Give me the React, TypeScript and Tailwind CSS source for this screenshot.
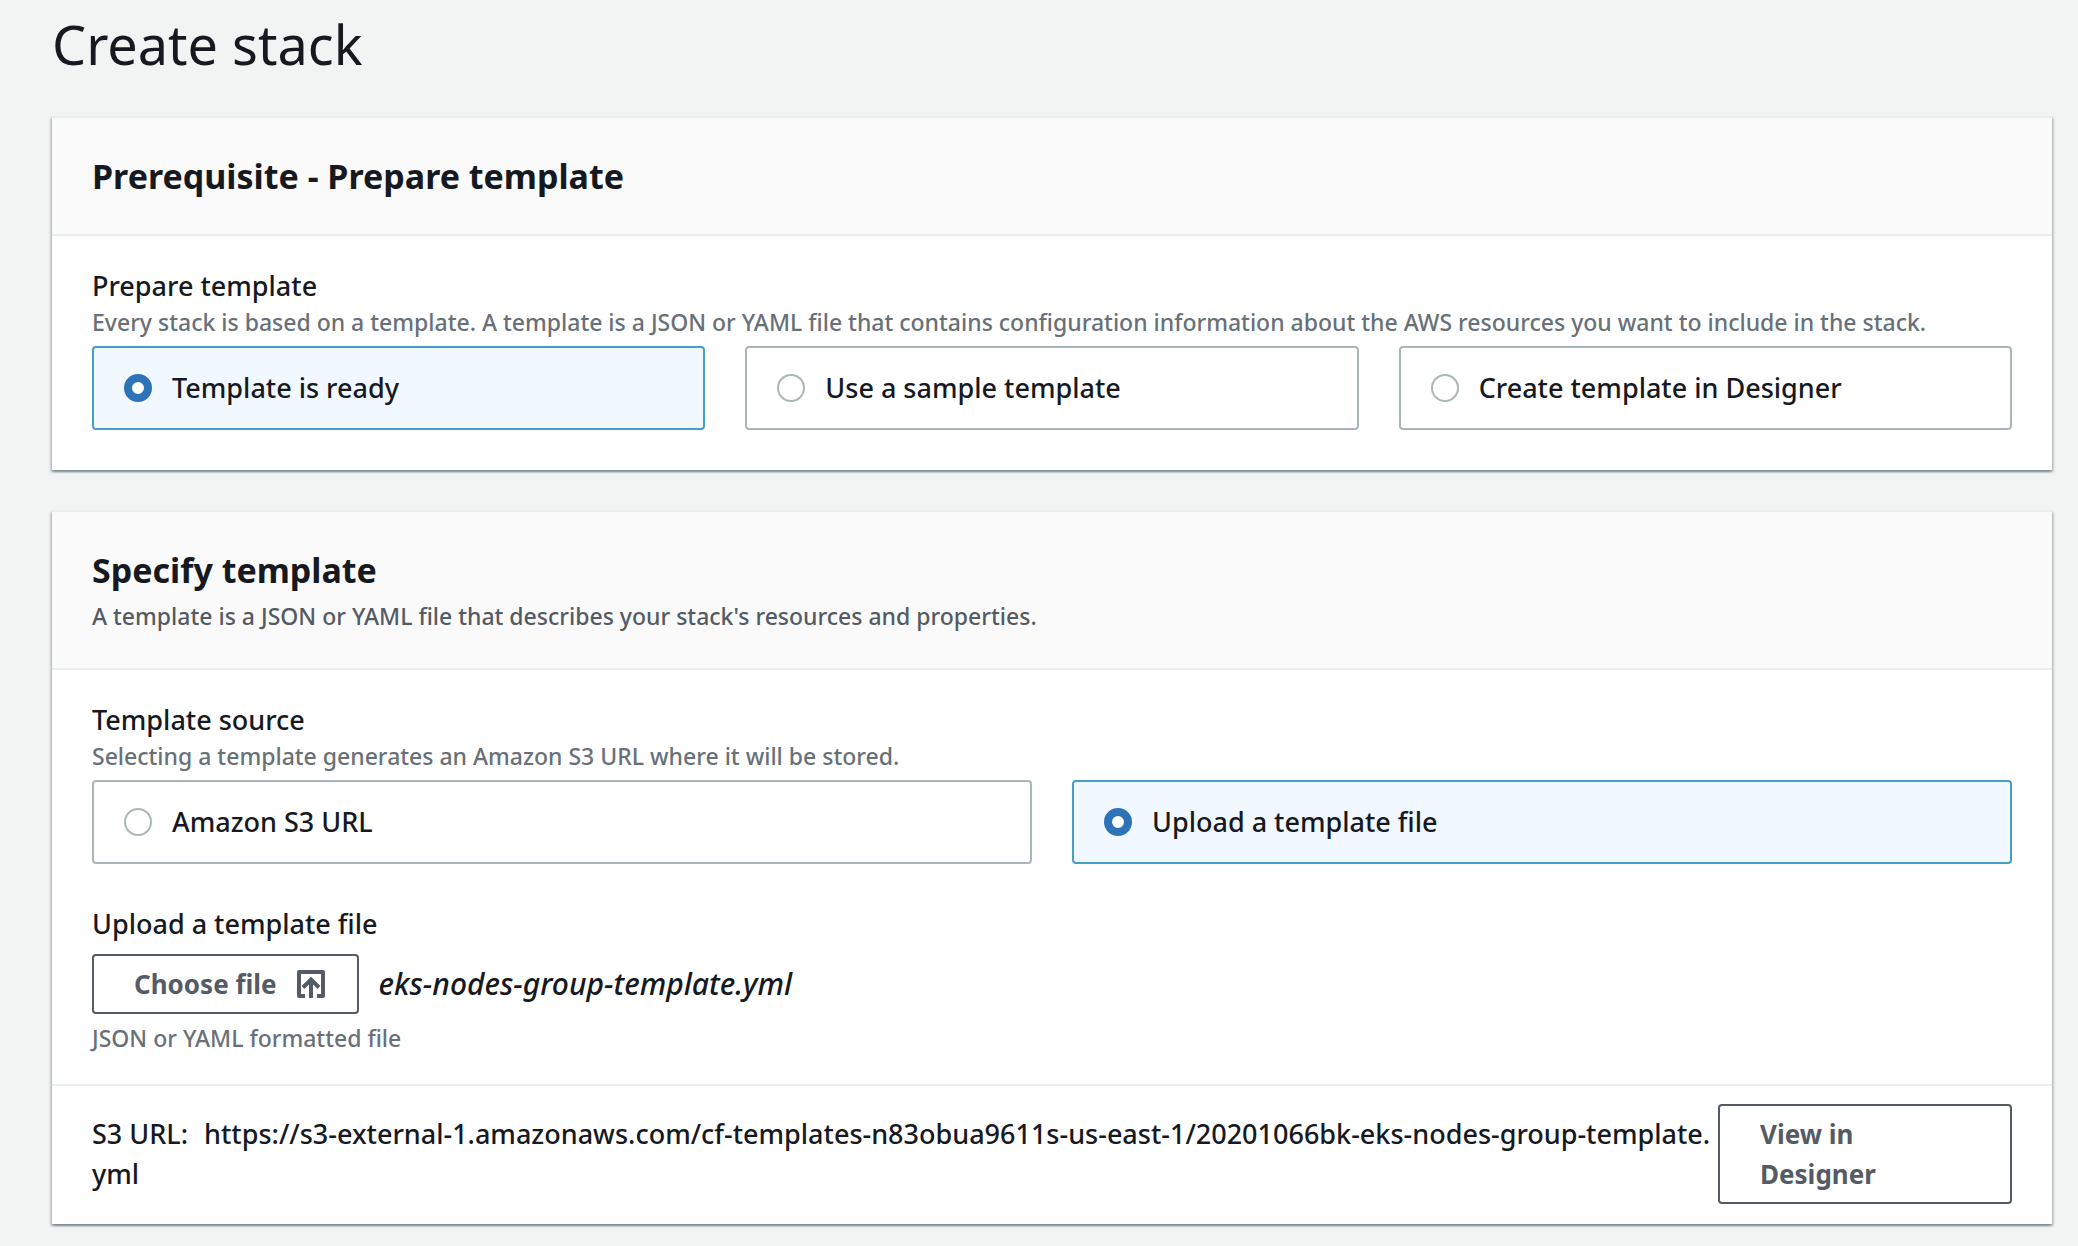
import React, { useRef, useState } from "react";

type TileProps = {
  name: string;
  label: string;
  checked: boolean;
  onSelect: () => void;
};

function Tile({ name, label, checked, onSelect }: TileProps) {
  return (
    <label
      className={
        checked
          ? "flex cursor-pointer items-center gap-5 rounded border-2 border-[#45a0c8] bg-[#f1f8ff] px-[30px] py-5"
          : "flex cursor-pointer items-center gap-5 rounded border-2 border-[#aab7b8] bg-white px-[30px] py-5"
      }
    >
      <input
        type="radio"
        name={name}
        checked={checked}
        onChange={onSelect}
        className="size-7 shrink-0 appearance-none rounded-full border-2 border-[#aab7b8] bg-white checked:border-8 checked:border-[#2e73b8]"
      />
      <span className="text-[27px] leading-10">{label}</span>
    </label>
  );
}

type TileGroupProps = {
  name: string;
  title: string;
  options: string[];
  initial: string;
  className: string;
};

function TileGroup({ name, title, options, initial, className }: TileGroupProps) {
  const [value, setValue] = useState(initial);
  return (
    <div role="radiogroup" aria-label={title} className={className}>
      {options.map((option) => (
        <Tile key={option} name={name} label={option} checked={option === value} onSelect={() => setValue(option)} />
      ))}
    </div>
  );
}

function Card({ title, description, children }: { title: string; description?: string; children: React.ReactNode }) {
  return (
    <section className="border-t-2 border-[#eaeded] bg-white shadow-[0_2px_2px_0_rgba(0,28,36,0.3),2px_2px_2px_0_rgba(0,28,36,0.15),-2px_2px_2px_0_rgba(0,28,36,0.15)]">
      <header className="border-b-2 border-[#eaeded] bg-[#fafafa] px-10 py-9">
        <h2 className="text-[34px] leading-[44px] font-bold">{title}</h2>
        {description && <p className="mt-2 text-[23px] leading-8 text-[#545b64]">{description}</p>}
      </header>
      {children}
    </section>
  );
}

function UploadIcon() {
  return (
    <svg viewBox="0 0 28 28" className="size-7 shrink-0" fill="none" stroke="currentColor" strokeWidth="4" aria-hidden="true">
      <path d="M8 26H2V2h24v24h-6" strokeLinejoin="round" />
      <path d="M14 28V10" />
      <path d="M6 17.5l8-8 8 8" />
    </svg>
  );
}

export default function App() {
  const fileInput = useRef<HTMLInputElement>(null);
  const [fileName, setFileName] = useState("eks-nodes-group-template.yml");

  return (
    <main className="min-h-screen bg-[#f2f3f3] pt-3 pr-[26px] pb-5 pl-[52px] font-['Noto_Sans','Open_Sans',sans-serif] font-medium text-[#16191f]">
      <h1 className="text-[54px] leading-[64px] font-normal">Create stack</h1>

      <div className="mt-10 flex flex-col gap-10">
        <Card title="Prerequisite - Prepare template">
          <div className="px-10 pt-[30px] pb-10">
            <h3 className="text-[27px] leading-10 font-medium">Prepare template</h3>
            <p className="text-[23px] leading-8 text-[#687078]">
              Every stack is based on a template. A template is a JSON or YAML file that contains configuration information about the AWS resources
              you want to include in the stack.
            </p>
            <TileGroup
              name="prepare-template"
              title="Prepare template"
              className="mt-2 grid grid-cols-3 gap-10"
              initial="Template is ready"
              options={["Template is ready", "Use a sample template", "Create template in Designer"]}
            />
          </div>
        </Card>

        <Card title="Specify template" description="A template is a JSON or YAML file that describes your stack's resources and properties.">
          <div className="px-10 py-[30px]">
            <h3 className="text-[27px] leading-10 font-medium">Template source</h3>
            <p className="text-[23px] leading-8 text-[#687078]">Selecting a template generates an Amazon S3 URL where it will be stored.</p>
            <TileGroup
              name="template-source"
              title="Template source"
              className="mt-2 grid grid-cols-2 gap-10"
              initial="Upload a template file"
              options={["Amazon S3 URL", "Upload a template file"]}
            />

            <label htmlFor="template-file" className="mt-10 block text-[27px] leading-10">
              Upload a template file
            </label>
            <div className="mt-[10px] flex items-center gap-5">
              <button
                type="button"
                onClick={() => fileInput.current?.click()}
                className="flex items-center gap-5 rounded border-2 border-[#545b64] bg-white py-2 pr-8 pl-10 text-[26px] leading-10 font-bold text-[#545b64]"
              >
                Choose file
                <UploadIcon />
              </button>
              <input
                ref={fileInput}
                id="template-file"
                type="file"
                accept=".json,.yml,.yaml"
                className="hidden"
                onChange={(e) => setFileName(e.target.files?.[0]?.name ?? fileName)}
              />
              <span className="text-[30px] leading-10 italic">{fileName}</span>
            </div>
            <p className="mt-2 text-[23px] leading-8 text-[#687078]">JSON or YAML formatted file</p>
          </div>

          <div className="flex items-center border-t-2 border-[#eaeded] px-10 pt-[18px] pb-5">
            <p className="min-w-0 flex-1 text-[27px] leading-10 break-all">
              <span className="mr-4">S3 URL:</span>
              https://s3-external-1.amazonaws.com/cf-templates-n83obua9611s-us-east-1/20201066bk-eks-nodes-group-template.yml
            </p>
            <button
              type="button"
              className="w-[294px] shrink-0 rounded border-2 border-[#545b64] bg-white px-10 py-2 text-left text-[26px] leading-10 font-bold text-[#545b64]"
            >
              View in Designer
            </button>
          </div>
        </Card>
      </div>
    </main>
  );
}
